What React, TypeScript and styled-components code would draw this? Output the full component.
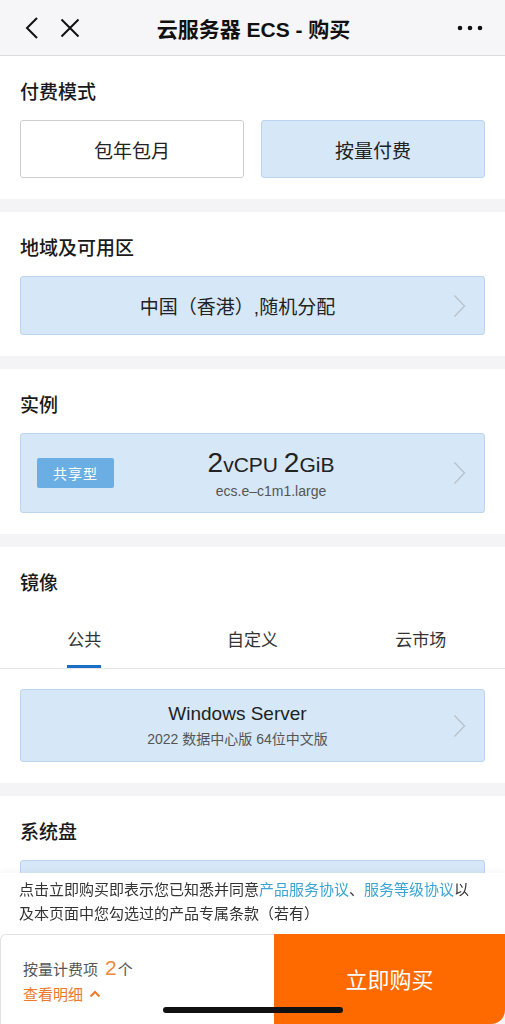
import React, {FC, useState} from 'react';
import styled, {createGlobalStyle} from "styled-components";

const GlobalStyle = createGlobalStyle`
  html, body {
    margin: 0;
    padding: 0;
    background: #f4f4f6;
    font-family: "Liberation Sans", "Noto Sans CJK SC", sans-serif;
    color: #1f1f1f;
  }
`

const Page = styled.div`
  width: 505px;
  height: 1024px;
  overflow: hidden;
  position: relative;
  background: #f4f4f6;
`
const Header = styled.header`
  height: 55px;
  background: #f6f6f8;
  border-bottom: 1px solid #dcdcde;
  display: flex;
  align-items: center;
  padding: 0 22px 0 24px;
`
const HeaderIcons = styled.div`
  display: flex;
  align-items: center;
  gap: 20px;
  width: 110px;
`
const HeaderTitle = styled.h1`
  flex: 1;
  margin: 0;
  text-align: center;
  font-size: 21px;
  font-weight: 600;
  color: #111;
  white-space: nowrap;
`
const HeaderMore = styled.div`
  width: 110px;
  display: flex;
  justify-content: flex-end;
`
const Section = styled.section`
  background: #fff;
  padding: 23px 20px 21px;
  margin-bottom: 13px;
`
const SectionTitle = styled.h2`
  margin: 0 0 13px;
  font-size: 19px;
  line-height: 28px;
  font-weight: 500;
  color: #1a1a1a;
`
const ButtonRow = styled.div`
  display: grid;
  grid-template-columns: 1fr 1fr;
  gap: 17px;
`
const OptionButton = styled.div<{ active: boolean }>`
  height: 56px;
  display: flex;
  align-items: center;
  justify-content: center;
  border-radius: 3px;
  font-size: 19px;
  color: #222;
  background: ${props => props.active ? "#d6e7f7" : "#fff"};
  border: 1px solid ${props => props.active ? "#bcd5ee" : "#cfcfcf"};
`
const SelectBox = styled.div<{ height: number }>`
  height: ${props => props.height}px;
  box-sizing: border-box;
  background: #d6e7f7;
  border: 1px solid #bcd5ee;
  border-radius: 3px;
  display: flex;
  align-items: center;
  padding: 0 18px 0 16px;
`
const Badge = styled.span`
  background: #6aaee4;
  color: #fff;
  font-size: 14px;
  border-radius: 2px;
  width: 77px;
  height: 30px;
  display: flex;
  align-items: center;
  justify-content: center;
  letter-spacing: 1px;
`
const BoxContent = styled.div<{ shift?: number }>`
  flex: 1;
  display: flex;
  flex-direction: column;
  align-items: center;
  justify-content: center;
  padding-right: ${props => props.shift ?? 8}px;
`
const MainText = styled.div`
  font-size: 19px;
  color: #222;
`
const SpecText = styled.div`
  font-size: 21px;
  color: #222;
  line-height: 30px;
  b {
    font-size: 28px;
    font-weight: 500;
  }
`
const SubText = styled.div`
  font-size: 14px;
  color: #555;
  margin-top: 3px;
`
const Chevron = styled.div`
  width: 20px;
  display: flex;
  justify-content: flex-end;
`
const Tabs = styled.div`
  display: grid;
  grid-template-columns: repeat(3, 1fr);
  margin: 0 -20px 20px;
  border-bottom: 1px solid #e6e6e6;
`
const Tab = styled.div<{ active: boolean }>`
  height: 57px;
  display: flex;
  justify-content: center;
  font-size: 17px;
  color: #333;
  span {
    height: 57px;
    box-sizing: border-box;
    padding-top: 15px;
    border-bottom: 3px solid ${props => props.active ? "#1a6fc4" : "transparent"};
  }
`
const Footer = styled.div`
  position: fixed;
  left: 0;
  right: 0;
  bottom: 0;
`
const Agreement = styled.p`
  margin: 0;
  background: #fff;
  padding: 5px 30px 8px 19px;
  font-size: 15px;
  line-height: 24px;
  color: #333;
  box-shadow: 0 -2px 6px rgba(0, 0, 0, 0.04);
  a {
    color: #3aa4d2;
    text-decoration: none;
  }
`
const BottomBar = styled.div`
  height: 90px;
  display: grid;
  grid-template-columns: 274px 1fr;
  position: relative;
`
const CostPanel = styled.div`
  background: #fff;
  border-top: 1px solid #e2e2e2;
  border-left: 1px solid #e2e2e2;
  border-top-left-radius: 6px;
  padding: 20px 22px 0;
  box-sizing: border-box;
`
const CostLine = styled.div`
  font-size: 15px;
  color: #555;
  line-height: 26px;
  b {
    font-weight: 400;
    font-size: 21px;
    color: #f0883a;
    margin: 0 1px 0 7px;
  }
`
const DetailLink = styled.div`
  font-size: 15px;
  color: #ec7a2c;
  display: flex;
  align-items: center;
  gap: 6px;
`
const BuyButton = styled.div`
  background: #ff6a00;
  color: #fff;
  font-size: 22px;
  display: flex;
  align-items: center;
  justify-content: center;
  border-bottom-right-radius: 14px;
  padding-bottom: 2px;
`
const HomeIndicator = styled.div`
  position: absolute;
  left: 163px;
  bottom: 11px;
  width: 180px;
  height: 6px;
  border-radius: 3px;
  background: #111;
`

const ChevronRight: FC = () => (
    <svg width="13" height="24" viewBox="0 0 13 24">
        <path d="M1.5 1.5 L11.5 12 L1.5 22.5" fill="none" stroke="#b9c2cb" strokeWidth="1.4"/>
    </svg>
)

const App: FC = () => {
    const [payMode, setPayMode] = useState<number>(1)
    const [tab, setTab] = useState<number>(0)
    const tabs = ['公共', '自定义', '云市场']

    return (
        <Page>
            <GlobalStyle/>
            <Header>
                <HeaderIcons>
                    <svg width="16" height="24" viewBox="0 0 16 24">
                        <path d="M13 2 L3 12 L13 22" fill="none" stroke="#111" strokeWidth="2"/>
                    </svg>
                    <svg width="20" height="20" viewBox="0 0 20 20">
                        <path d="M1.5 1.5 L18.5 18.5 M18.5 1.5 L1.5 18.5" fill="none" stroke="#111" strokeWidth="2"/>
                    </svg>
                </HeaderIcons>
                <HeaderTitle>云服务器 ECS - 购买</HeaderTitle>
                <HeaderMore>
                    <svg width="26" height="6" viewBox="0 0 26 6">
                        <circle cx="3" cy="3" r="2.3" fill="#111"/>
                        <circle cx="13" cy="3" r="2.3" fill="#111"/>
                        <circle cx="23" cy="3" r="2.3" fill="#111"/>
                    </svg>
                </HeaderMore>
            </Header>

            <Section>
                <SectionTitle>付费模式</SectionTitle>
                <ButtonRow>
                    {['包年包月', '按量付费'].map((item, index) => (
                        <OptionButton key={item} active={payMode === index} onClick={() => setPayMode(index)}>
                            {item}
                        </OptionButton>
                    ))}
                </ButtonRow>
            </Section>

            <Section>
                <SectionTitle>地域及可用区</SectionTitle>
                <SelectBox height={59}>
                    <BoxContent>
                        <MainText>中国（香港）,随机分配</MainText>
                    </BoxContent>
                    <Chevron><ChevronRight/></Chevron>
                </SelectBox>
            </Section>

            <Section>
                <SectionTitle>实例</SectionTitle>
                <SelectBox height={80}>
                    <Badge>共享型</Badge>
                    <BoxContent shift={18}>
                        <SpecText><b>2</b>vCPU <b>2</b>GiB</SpecText>
                        <SubText>ecs.e–c1m1.large</SubText>
                    </BoxContent>
                    <Chevron><ChevronRight/></Chevron>
                </SelectBox>
            </Section>

            <Section>
                <SectionTitle>镜像</SectionTitle>
                <Tabs>
                    {tabs.map((item, index) => (
                        <Tab key={item} active={tab === index} onClick={() => setTab(index)}>
                            <span>{item}</span>
                        </Tab>
                    ))}
                </Tabs>
                <SelectBox height={73}>
                    <BoxContent>
                        <MainText>Windows Server</MainText>
                        <SubText>2022 数据中心版 64位中文版</SubText>
                    </BoxContent>
                    <Chevron><ChevronRight/></Chevron>
                </SelectBox>
            </Section>

            <Section>
                <SectionTitle>系统盘</SectionTitle>
                <SelectBox height={74}/>
            </Section>

            <Footer>
                <Agreement>
                    点击立即购买即表示您已知悉并同意<a href="#">产品服务协议</a>、<a href="#">服务等级协议</a>以及本页面中您勾选过的产品专属条款（若有）
                </Agreement>
                <BottomBar>
                    <CostPanel>
                        <CostLine>按量计费项<b>2</b>个</CostLine>
                        <DetailLink>
                            查看明细
                            <svg width="12" height="8" viewBox="0 0 12 8">
                                <path d="M1.5 6.5 L6 2 L10.5 6.5" fill="none" stroke="#ec7a2c" strokeWidth="2"/>
                            </svg>
                        </DetailLink>
                    </CostPanel>
                    <BuyButton>立即购买</BuyButton>
                    <HomeIndicator/>
                </BottomBar>
            </Footer>
        </Page>
    );
};

export default App
